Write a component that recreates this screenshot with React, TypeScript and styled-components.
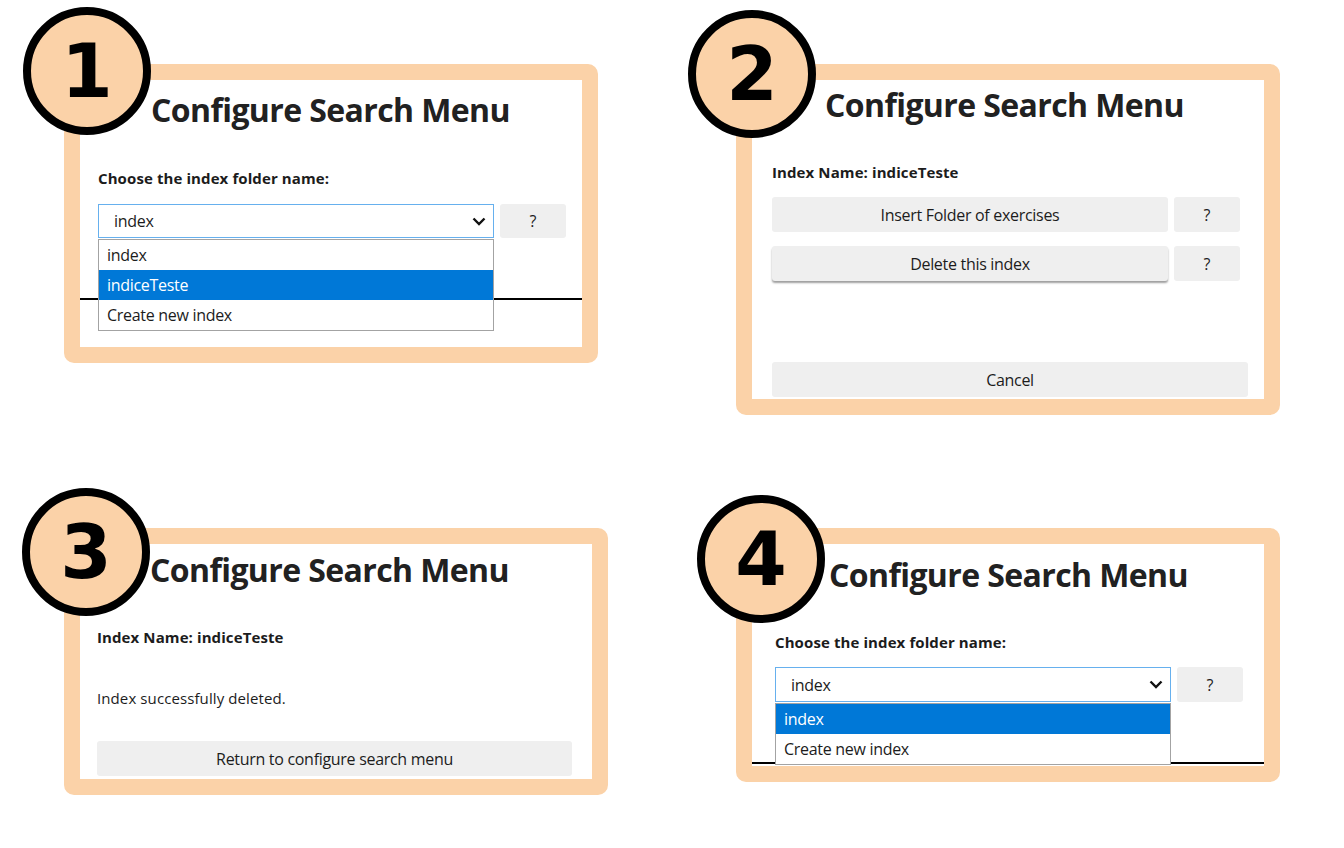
import React from "react";
import styled, { createGlobalStyle } from "styled-components";

const ORANGE = "#fbd2a8";
const FONT = `"Open Sans", "Noto Sans", sans-serif`;

const Global = createGlobalStyle`
  html, body { margin: 0; padding: 0; background: #fff; }
  body { font-family: ${FONT}; color: #212121; }
  * { box-sizing: border-box; }
`;

const Page = styled.div`
  display: grid;
  grid-template-columns: 672px 544px;
  grid-template-rows: 464px auto;
  align-items: start;
  padding: 64px 0 0 64px;
  width: 1344px;
  height: 848px;
  overflow: hidden;
`;

const Panel = styled.section<{ $w: number; $h: number }>`
  position: relative;
  width: ${(p) => p.$w}px;
  height: ${(p) => p.$h}px;
  border: 16px solid ${ORANGE};
  border-radius: 10px;
  background: #fff;
  display: flex;
  flex-direction: column;
`;

const Badge = styled.div<{ $x: number; $y: number }>`
  position: absolute;
  left: ${(p) => p.$x}px;
  top: ${(p) => p.$y}px;
  width: 128px;
  height: 128px;
  border-radius: 50%;
  border: 8px solid #000;
  background: ${ORANGE};
  display: flex;
  align-items: center;
  justify-content: center;
  font-family: "DejaVu Sans", sans-serif;
  font-weight: 700;
  font-size: 74px;
  line-height: 1;
  color: #000;
  z-index: 3;
`;

const Screen = styled.div`
  position: relative;
  height: 220px;
  border-bottom: 2px solid #000;
  flex: none;
`;

const Title = styled.h1<{ $indent: number; $top: number }>`
  margin: ${(p) => p.$top}px 0 0 ${(p) => p.$indent}px;
  font-size: 32px;
  line-height: 40px;
  font-weight: 700;
  color: #212121;
  letter-spacing: -0.6px;
  white-space: nowrap;
`;

const Body = styled.div<{ $pad: number }>`
  padding-left: ${(p) => p.$pad}px;
  display: flex;
  flex-direction: column;
  align-items: flex-start;
`;

const Label = styled.p<{ $top: number }>`
  margin: ${(p) => p.$top}px 0 0;
  font-size: 15px;
  line-height: 20px;
  font-weight: 700;
  color: #1c1c1c;
  letter-spacing: 0.1px;
  white-space: nowrap;
`;

const Message = styled.p<{ $top: number }>`
  margin: ${(p) => p.$top}px 0 0;
  font-size: 15px;
  line-height: 20px;
  font-weight: 400;
  color: #1c1c1c;
  letter-spacing: 0.1px;
`;

const Row = styled.div<{ $top: number; $h: number }>`
  margin-top: ${(p) => p.$top}px;
  height: ${(p) => p.$h}px;
  display: flex;
  gap: 6px;
`;

const SelectWrap = styled.div`
  position: relative;
  width: 396px;
  height: 100%;
`;

const SelectBox = styled.div`
  height: 100%;
  border: 1px solid #66b0ee;
  background: #fff;
  display: flex;
  align-items: center;
  justify-content: space-between;
  padding: 0 7px 0 15px;
  font-size: 16px;
  letter-spacing: -0.3px;
  color: #1c1c1c;
`;

const OptionList = styled.ul`
  position: absolute;
  top: 100%;
  left: 0;
  width: 396px;
  margin: 1px 0 0;
  padding: 0;
  list-style: none;
  border: 1px solid #a3a3a3;
  background: #fff;
  z-index: 2;
`;

const Option = styled.li<{ $active?: boolean }>`
  height: 30px;
  display: flex;
  align-items: center;
  padding-left: 8px;
  font-size: 16px;
  letter-spacing: -0.3px;
  background: ${(p) => (p.$active ? "#0078d7" : "#fff")};
  color: ${(p) => (p.$active ? "#fff" : "#1c1c1c")};
`;

const GreyButton = styled.button<{ $w: number; $top?: number; $raised?: boolean }>`
  width: ${(p) => p.$w}px;
  height: 35px;
  flex: none;
  margin-top: ${(p) => p.$top ?? 0}px;
  border: none;
  border-radius: 3px;
  background: #efefef;
  font-family: ${FONT};
  font-size: 16px;
  letter-spacing: -0.3px;
  color: #1c1c1c;
  padding: 0;
  box-shadow: ${(p) => (p.$raised ? "0 2px 2px rgba(0,0,0,0.38)" : "none")};
`;

const HelpButton = styled.button`
  width: 66px;
  height: 100%;
  border: none;
  border-radius: 3px;
  background: #efefef;
  font-family: ${FONT};
  font-size: 16px;
  color: #1c1c1c;
  padding: 0;
`;

const Chevron = () => (
  <svg width="14" height="9" viewBox="0 0 14 9">
    <polyline points="1.5,1.5 7,7 12.5,1.5" fill="none" stroke="#111" strokeWidth="2.4" strokeLinejoin="miter" />
  </svg>
);

type Opt = { text: string; active?: boolean };

const Dropdown = ({ value, options }: { value: string; options: Opt[] }) => (
  <SelectWrap>
    <SelectBox>
      <span>{value}</span>
      <Chevron />
    </SelectBox>
    <OptionList>
      {options.map((o) => (
        <Option key={o.text} $active={o.active}>
          {o.text}
        </Option>
      ))}
    </OptionList>
  </SelectWrap>
);

export default function App() {
  return (
    <>
      <Global />
      <Page>
        <Panel $w={534} $h={299}>
          <Badge $x={-57} $y={-73}>1</Badge>
          <Screen>
            <Title $indent={71} $top={10}>Configure Search Menu</Title>
            <Body $pad={18}>
              <Label $top={38}>Choose the index folder name:</Label>
              <Row $top={16} $h={34}>
                <Dropdown
                  value="index"
                  options={[{ text: "index" }, { text: "indiceTeste", active: true }, { text: "Create new index" }]}
                />
                <HelpButton>?</HelpButton>
              </Row>
            </Body>
          </Screen>
        </Panel>

        <Panel $w={544} $h={351}>
          <Badge $x={-64} $y={-70}>2</Badge>
          <Title $indent={73} $top={5}>Configure Search Menu</Title>
          <Body $pad={20}>
            <Label $top={37}>Index Name: indiceTeste</Label>
            <Row $top={15} $h={35}>
              <GreyButton $w={396}>Insert Folder of exercises</GreyButton>
              <HelpButton>?</HelpButton>
            </Row>
            <Row $top={14} $h={35}>
              <GreyButton $w={396} $raised>Delete this index</GreyButton>
              <HelpButton>?</HelpButton>
            </Row>
            <GreyButton $w={476} $top={81}>Cancel</GreyButton>
          </Body>
        </Panel>

        <Panel $w={544} $h={267}>
          <Badge $x={-58} $y={-56}>3</Badge>
          <Title $indent={70} $top={6}>Configure Search Menu</Title>
          <Body $pad={17}>
            <Label $top={37}>Index Name: indiceTeste</Label>
            <Message $top={41}>Index successfully deleted.</Message>
            <GreyButton $w={475} $top={33}>Return to configure search menu</GreyButton>
          </Body>
        </Panel>

        <Panel $w={544} $h={254}>
          <Badge $x={-55} $y={-49}>4</Badge>
          <Screen>
            <Title $indent={77} $top={11}>Configure Search Menu</Title>
            <Body $pad={23}>
              <Label $top={37}>Choose the index folder name:</Label>
              <Row $top={15} $h={35}>
                <Dropdown value="index" options={[{ text: "index", active: true }, { text: "Create new index" }]} />
                <HelpButton>?</HelpButton>
              </Row>
            </Body>
          </Screen>
        </Panel>
      </Page>
    </>
  );
}
